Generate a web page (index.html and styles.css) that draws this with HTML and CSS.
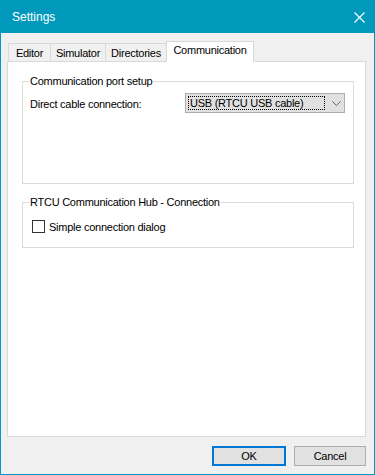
FILE: index.html
```html
<!DOCTYPE html>
<html>
<head>
<meta charset="utf-8">
<title>Settings</title>
<link rel="stylesheet" href="styles.css">
</head>
<body>
<div class="window">
  <div class="titlebar">
    <span class="title">Settings</span>
    <svg class="close" width="11" height="11" viewBox="0 0 11 11"><path d="M0.5 0.5 L10.5 10.5 M10.5 0.5 L0.5 10.5" stroke="#ffffff" stroke-width="1.1" fill="none"/></svg>
  </div>
  <div class="client">
    <div class="tabs">
      <div class="tab t-editor">Editor</div>
      <div class="tab t-sim">Simulator</div>
      <div class="tab t-dir">Directories</div>
      <div class="tab t-comm selected">Communication</div>
    </div>
    <div class="panel">
      <fieldset class="group g1">
        <legend>Communication port setup</legend>
        <div class="row">
          <span class="row-label">Direct cable connection:</span>
          <div class="combo">
            <span class="combo-value">USB (RTCU USB cable)</span>
            <svg class="chev" width="9" height="5" viewBox="0 0 9 5"><path d="M0.5 0.5 L4.5 4.5 L8.5 0.5" stroke="#606060" stroke-width="1" fill="none"/></svg>
          </div>
        </div>
      </fieldset>
      <fieldset class="group g2">
        <legend>RTCU Communication Hub - Connection</legend>
        <div class="check-row">
          <span class="checkbox"></span>
          <span class="check-label">Simple connection dialog</span>
        </div>
      </fieldset>
    </div>
    <div class="buttons">
      <div class="btn btn-ok">OK</div>
      <div class="btn btn-cancel">Cancel</div>
    </div>
  </div>
</div>
</body>
</html>
```

FILE: styles.css
```css
html, body {
  margin: 0;
  padding: 0;
  background: #ffffff;
}
body {
  width: 375px;
  height: 475px;
  overflow: hidden;
  font-family: "Liberation Sans", Arial, sans-serif;
  font-size: 11px;
  letter-spacing: -0.25px;
  color: #000000;
}
.window {
  box-sizing: border-box;
  width: 375px;
  height: 475px;
  border: 1px solid #0099bc;
  border-top: none;
  background: #f0f0f0;
  display: flex;
  flex-direction: column;
}
.titlebar {
  height: 33px;
  background: #0099bc;
  display: flex;
  align-items: center;
  justify-content: space-between;
  padding: 0 9px 0 11px;
  flex: none;
}
.title {
  color: #ffffff;
  font-size: 12px;
  letter-spacing: 0;
}
.close {
  display: block;
  margin-top: 1px;
}
.client {
  flex: 1;
  padding: 8px 8px 0 6px;
  display: flex;
  flex-direction: column;
}
.tabs {
  display: flex;
  align-items: flex-end;
  height: 21px;
  margin-bottom: -1px;
  padding-left: 1px;
  position: relative;
  z-index: 1;
}
.tab {
  box-sizing: border-box;
  height: 18px;
  margin-bottom: 1px;
  border: 1px solid #d9d9d9;
  border-bottom: none;
  background: #f0f0f0;
  display: flex;
  align-items: center;
  justify-content: center;
  line-height: 13px;
  padding-top: 1px;
}
.tab + .tab {
  margin-left: -1px;
}
.t-editor { width: 43px; }
.t-sim { width: 56px; }
.t-dir { width: 62px; }
.t-comm { width: 88px; }
.tab.selected {
  height: 21px;
  margin-bottom: 0;
  background: #ffffff;
  padding-top: 0;
  padding-bottom: 3px;
}
.panel {
  box-sizing: border-box;
  width: 359px;
  height: 376px;
  border: 1px solid #d9d9d9;
  background: #ffffff;
  padding: 13px 11px 0 14px;
  flex: none;
}
.group {
  box-sizing: border-box;
  margin: 0;
  padding: 0;
  border: 1px solid #dcdcdc;
  min-width: 0;
}
.group legend {
  margin-left: 6px;
  padding: 0 1px;
  line-height: 13px;
}
.g1 {
  height: 109px;
}
.g2 {
  height: 52px;
  margin-top: 12px;
}
.row {
  display: flex;
  align-items: center;
  margin-top: 5px;
  padding-left: 7px;
}
.row-label {
  width: 155px;
  padding-top: 2px;
}
.combo {
  box-sizing: border-box;
  width: 160px;
  height: 20px;
  border: 1px solid #adadad;
  background: #e1e1e1;
  display: flex;
  align-items: center;
  padding-left: 2px;
}
.combo-value {
  box-sizing: border-box;
  width: 137px;
  height: 14px;
  border: 1px dotted #000000;
  line-height: 12px;
  padding-left: 1px;
}
.chev {
  display: block;
  margin-left: 7px;
}
.check-row {
  display: flex;
  align-items: center;
  margin-top: 11px;
  padding-left: 9px;
}
.checkbox {
  box-sizing: border-box;
  width: 13px;
  height: 13px;
  border: 1px solid #333333;
  background: #ffffff;
  flex: none;
}
.check-label {
  margin-left: 4px;
}
.buttons {
  display: flex;
  justify-content: flex-end;
  gap: 8px;
  margin-top: 9px;
  padding-right: 0;
}
.btn {
  box-sizing: border-box;
  height: 20px;
  background: #e1e1e1;
  display: flex;
  align-items: center;
  justify-content: center;
}
.btn-ok {
  width: 74px;
  border: 2px solid #0078d7;
}
.btn-cancel {
  width: 72px;
  border: 1px solid #adadad;
}
```
